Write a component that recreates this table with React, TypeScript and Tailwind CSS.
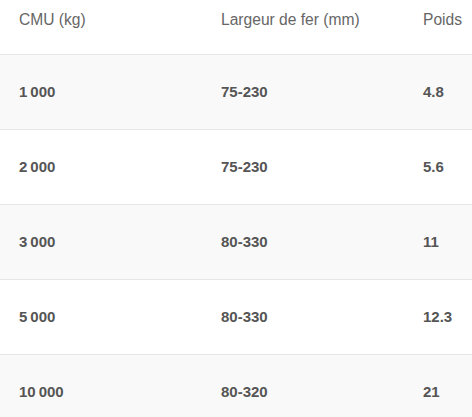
const rows = [
  { cmu: "1\u202F000", largeur: "75-230", poids: "4.8" },
  { cmu: "2\u202F000", largeur: "75-230", poids: "5.6" },
  { cmu: "3\u202F000", largeur: "80-330", poids: "11" },
  { cmu: "5\u202F000", largeur: "80-330", poids: "12.3" },
  { cmu: "10\u202F000", largeur: "80-320", poids: "21" },
];

export default function App() {
  return (
    <div className="w-[472px] h-[417px] overflow-hidden bg-white font-['Liberation_Sans',Arial,sans-serif] text-[15px]">
      <div className="w-[620px]">
        {/* Header */}
        <div className="grid grid-cols-[202px_202px_216px] h-[55px] border-b border-[#e6e6e6] pt-[9px] leading-[22px] text-[15.6px] text-[#666]">
          <div className="pl-[19px]">CMU (kg)</div>
          <div className="pl-[19px]">Largeur de fer (mm)</div>
          <div className="pl-[19px]">Poids</div>
        </div>

        {/* Rows */}
        {rows.map((row, i) => (
          <div
            key={row.cmu}
            className={`grid grid-cols-[202px_202px_216px] items-center h-[75px] border-b border-[#e6e6e6] font-bold text-[#555] ${
              i % 2 === 0 ? "bg-[#f9f9f9]" : "bg-white"
            }`}
          >
            <div className="pl-[19px]">{row.cmu}</div>
            <div className="pl-[19px]">{row.largeur}</div>
            <div className="pl-[19px]">{row.poids}</div>
          </div>
        ))}
      </div>
    </div>
  );
}
